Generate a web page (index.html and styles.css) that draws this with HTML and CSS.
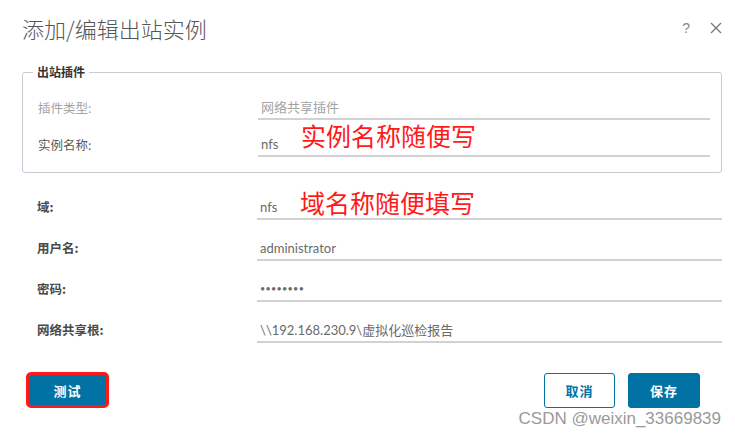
FILE: index.html
```html
<!DOCTYPE html>
<html lang="zh-CN">

<head>
    <meta charset="UTF-8">
    <meta name="viewport" content="width=device-width, initial-scale=1.0">
    <title>添加/编辑出站实例</title>
    <link rel="stylesheet" href="styles.css">
</head>

<body>
    <div class="dialog">
        <!-- Nagłówek okna -->
        <div class="header">
            <h2 class="title">添加/编辑出站实例</h2>
            <div class="header-actions">
                <span class="help">?</span>
                <svg class="close" width="12" height="12" viewBox="0 0 12 12">
                    <path d="M1 1 L11 11 M11 1 L1 11" stroke="#777" stroke-width="1.3" fill="none" />
                </svg>
            </div>
        </div>

        <fieldset class="plugin">
            <legend>出站插件</legend>
            <div class="row">
                <span class="label disabled">插件类型:</span>
                <span class="field disabled">网络共享插件</span>
            </div>
            <div class="row">
                <span class="label">实例名称:</span>
                <span class="field">nfs<span class="note note-name">实例名称随便写</span></span>
            </div>
        </fieldset>

        <div class="fields">
            <div class="row">
                <span class="label strong">域:</span>
                <span class="field">nfs<span class="note note-domain">域名称随便填写</span></span>
            </div>
            <div class="row">
                <span class="label strong">用户名:</span>
                <span class="field">administrator</span>
            </div>
            <div class="row">
                <span class="label strong">密码:</span>
                <span class="field dots">••••••••</span>
            </div>
            <div class="row">
                <span class="label strong">网络共享根:</span>
                <span class="field">\\192.168.230.9\虚拟化巡检报告</span>
            </div>
        </div>

        <div class="footer">
            <button class="btn primary marked">测试</button>
            <div class="footer-right">
                <button class="btn outline">取消</button>
                <button class="btn primary">保存</button>
            </div>
        </div>

        <div class="watermark">CSDN @weixin_33669839</div>
    </div>
</body>

</html>
```

FILE: styles.css
```css
/* Cała strona */
body {
    margin: 0;
    background-color: #fff;
    font-family: Lato, "Noto Sans CJK SC", sans-serif;
    color: #565656;
}

/* Okno dialogowe */
.dialog {
    position: relative;
    height: 437px;
    padding: 12px 13px 0 22px;
    box-sizing: border-box;
}

.header {
    display: flex;
    align-items: center;
    height: 32px;
}

.title {
    flex: 1;
    margin: 0;
    font-family: "Noto Sans CJK SC", sans-serif;
    font-size: 22px;
    font-weight: 300;
    line-height: 32px;
    color: #565656;
}

.header-actions {
    display: flex;
    align-items: center;
    gap: 20px;
}

.help {
    font-family: "Liberation Sans", sans-serif;
    font-size: 14px;
    color: #888;
}

/* Ramka z wtyczką */
.plugin {
    margin: 20px 0 0 0;
    padding: 3px 11px 15px 15px;
    border: 1px solid #c9ccd4;
    border-radius: 3px;
}

.plugin legend {
    margin-left: -5px;
    padding: 0 4px;
    font-family: "Noto Sans CJK SC", sans-serif;
    font-size: 12px;
    font-weight: bold;
    line-height: 16px;
    color: #333;
}

/* Wiersze formularza */
.row {
    display: flex;
    align-items: flex-end;
    height: 37px;
}

.fields {
    margin-top: 6px;
    padding-left: 15px;
}

.fields .row {
    height: 41px;
}

.label {
    width: 220px;
    padding-bottom: 4px;
    font-family: "Noto Sans CJK SC", sans-serif;
    font-size: 12.5px;
    line-height: 16px;
    color: #5a5a5a;
}

.label.strong {
    padding-bottom: 5px;
    font-weight: bold;
    color: #4a4a4a;
}

.field {
    position: relative;
    flex: 1;
    padding: 0 2px 3px 3px;
    border-bottom: 2px solid #d2d2d2;
    font-size: 13px;
    line-height: 16px;
    color: #6a6a6a;
}

.disabled {
    color: #a3a3a3;
}

.dots {
    font-size: 9px;
    letter-spacing: 0.3px;
}

/* Czerwone dopiski */
.note {
    position: absolute;
    left: 43px;
    font-family: "Noto Sans CJK SC", sans-serif;
    font-size: 25px;
    line-height: 25px;
    color: #ff1a1a;
    white-space: nowrap;
}

.note-name {
    bottom: 7px;
}

.note-domain {
    bottom: 3px;
}

/* Przyciski */
.footer {
    display: flex;
    justify-content: space-between;
    margin-top: 30px;
    padding: 0 22px 0 7px;
}

.footer-right {
    display: flex;
    gap: 13px;
}

.btn {
    height: 35px;
    padding: 0;
    border: 1px solid #0072a3;
    border-radius: 3px;
    font-family: "Noto Sans CJK SC", sans-serif;
    font-size: 13px;
    font-weight: bold;
    letter-spacing: 1px;
}

.primary {
    width: 72px;
    background-color: #0072a3;
    color: #fff;
}

.outline {
    width: 71px;
    background-color: #fff;
    color: #0072a3;
}

.marked {
    position: relative;
    width: 77px;
}

.marked::after {
    content: "";
    position: absolute;
    top: -2px;
    bottom: -1px;
    left: -4px;
    right: -4px;
    border: 3px solid #ff1a1a;
    border-radius: 5px;
}

.watermark {
    position: absolute;
    right: 14px;
    bottom: 8px;
    font-family: "Liberation Sans", sans-serif;
    font-size: 17px;
    line-height: 20px;
    color: #9a9a9a;
}
```
